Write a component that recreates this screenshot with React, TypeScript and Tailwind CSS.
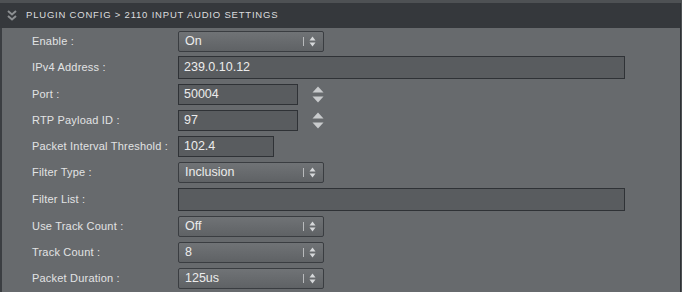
import { ReactNode } from 'react';

function ChevronsDown() {
  return (
    <svg width="10" height="11" viewBox="0 0 10 11" className="ml-[6px] mr-[9px]">
      <path d="M1 1 L5 4.5 L9 1" fill="none" stroke="#8c8f92" strokeWidth="2" />
      <path d="M1 6 L5 9.5 L9 6" fill="none" stroke="#8c8f92" strokeWidth="2" />
    </svg>
  );
}

function SelectArrows() {
  return (
    <svg width="7" height="11" viewBox="0 0 7 11">
      <path d="M0.5 4.5 L3.5 0.5 L6.5 4.5 Z" fill="#d6d8da" />
      <path d="M0.5 6.5 L3.5 10.5 L6.5 6.5 Z" fill="#d6d8da" />
    </svg>
  );
}

function Spinner() {
  return (
    <svg width="12" height="17" viewBox="0 0 12 17" className="ml-[14px]">
      <path d="M0.5 6.5 L6 0.5 L11.5 6.5 Z" fill="#c9cbcd" />
      <path d="M0.5 10.5 L6 16.5 L11.5 10.5 Z" fill="#c9cbcd" />
    </svg>
  );
}

function Select({ value }: { value: string }) {
  return (
    <div className="w-[146px] h-[21px] rounded-[2px] border border-[#3a3d41] bg-gradient-to-b from-[#707376] to-[#5f6265] flex items-center pl-[6px] pr-[7px] text-[12.5px] text-[#ececec]">
      <span className="flex-1">{value}</span>
      <span className="w-px h-[9px] bg-[#b8babc] mr-[5px]" />
      <SelectArrows />
    </div>
  );
}

function Input({ value = '', w, h = 21 }: { value?: string; w: string; h?: number }) {
  return (
    <div
      className={`${w} ${h === 23 ? 'h-[23px]' : 'h-[21px]'} border border-[#2f3236] bg-[#595c5f] flex items-center pl-[5px] text-[12.5px] text-[#ececec]`}
    >
      {value}
    </div>
  );
}

function Row({ label, children, mt = 'mt-[5px]' }: { label: string; children: ReactNode; mt?: string }) {
  return (
    <div className={`flex items-center ${mt}`}>
      <div className="w-[146px] text-[11px] text-[#e2e3e4] tracking-[0.2px]">{label}</div>
      {children}
    </div>
  );
}

export default function App() {
  return (
    <div className="w-[682px] h-[292px] overflow-hidden bg-[#4e5154] pt-[3px] pr-px font-['Liberation_Sans',sans-serif]">
      <div className="h-full border-r border-[#2f3236] flex flex-col">
        <div className="h-[25px] bg-[#35383c] flex items-center pl-px">
          <ChevronsDown />
          <span className="text-[9.5px] tracking-[0.8px] text-[#dcdddf]">PLUGIN CONFIG &gt; 2110 INPUT AUDIO SETTINGS</span>
        </div>
        <div className="flex-1 bg-[#676a6d] border-l-2 border-[#3b3e42] pl-[30px] pt-[3px]">
          <Row label="Enable :" mt="mt-0">
            <Select value="On" />
          </Row>
          <Row label="IPv4 Address :" mt="mt-[4px]">
            <Input value="239.0.10.12" w="w-[447px]" h={23} />
          </Row>
          <Row label="Port :">
            <Input value="50004" w="w-[120px]" />
            <Spinner />
          </Row>
          <Row label="RTP Payload ID :">
            <Input value="97" w="w-[120px]" />
            <Spinner />
          </Row>
          <Row label="Packet Interval Threshold :">
            <Input value="102.4" w="w-[96px]" />
          </Row>
          <Row label="Filter Type :">
            <Select value="Inclusion" />
          </Row>
          <Row label="Filter List :">
            <Input w="w-[447px]" h={23} />
          </Row>
          <Row label="Use Track Count :">
            <Select value="Off" />
          </Row>
          <Row label="Track Count :">
            <Select value="8" />
          </Row>
          <Row label="Packet Duration :">
            <Select value="125us" />
          </Row>
        </div>
      </div>
    </div>
  );
}
